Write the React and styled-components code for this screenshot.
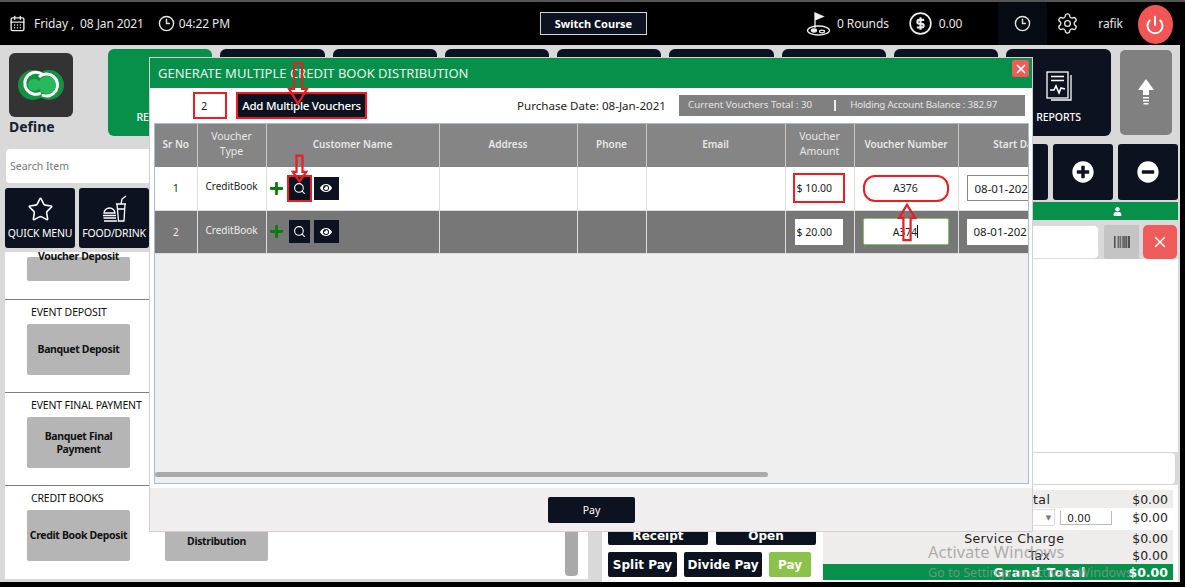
import { createGlobalStyle } from 'styled-components'
import styled from 'styled-components'
import { CalendarDays, Clock3, Settings, Power, Search, Star, X } from 'lucide-react'
import { FaEye, FaPlus, FaPlusCircle, FaMinusCircle, FaUser, FaBarcode } from 'react-icons/fa'

const GlobalStyle = createGlobalStyle`
  * {
    margin: 0;
    padding: 0;
    box-sizing: border-box;
  }

  html, body {
    width: 100%;
    height: 100%;
    overflow: hidden;
    background: #000;
    font-family: 'Noto Sans', 'Open Sans', sans-serif;
  }
`

const Page = styled.div`
  position: relative;
  width: 1185px;
  height: 587px;
  background: #000;
  border-top: 2px solid #555;
  overflow: hidden;
`

const TopBar = styled.header`
  display: flex;
  align-items: center;
  height: 43px;
  padding-left: 9px;
  color: #e6e6e6;
  font-size: 12px;
  letter-spacing: -0.1px;
  white-space: nowrap;
`

const TopItem = styled.div`
  display: flex;
  align-items: center;
  gap: ${({ gap }) => gap || 6}px;
  margin-left: ${({ left }) => left || 0}px;
`

const SwitchButton = styled.button`
  width: 107px;
  height: 23px;
  margin-left: ${({ left }) => left}px;
  background: #0c1220;
  border: 1px solid #d5d5d5;
  color: #fff;
  font: 700 11px 'Noto Sans', sans-serif;
`

const ClockBox = styled.div`
  display: flex;
  align-items: center;
  justify-content: center;
  width: 49px;
  height: 43px;
  margin-left: 36px;
  background: #060a12;
`

const PowerButton = styled.div`
  display: flex;
  align-items: center;
  justify-content: center;
  width: 35px;
  height: 39px;
  margin-left: 15px;
  margin-top: 2px;
  border-radius: 50%;
  background: #f25555;
  color: #fff;
`

const Workspace = styled.div`
  width: 1180px;
  height: 537px;
  background: #d9d9d9;
`

const NavRow = styled.div`
  display: flex;
  height: 98px;
  padding: 4px 0 0 9px;
`

const Brand = styled.div`
  width: 99px;
  padding-top: 4px;
  color: #15202e;
  font-size: 14px;
  font-weight: 700;
  line-height: 18px;
`

const LogoBox = styled.div`
  display: flex;
  align-items: center;
  justify-content: center;
  width: 64px;
  height: 64px;
  margin-bottom: 1px;
  border-radius: 6px;
  background: #333;
`

const NavTiles = styled.div`
  display: flex;
  gap: 8px;
`

const NavTile = styled.div`
  display: flex;
  flex-direction: column;
  align-items: center;
  justify-content: flex-end;
  gap: 9px;
  width: 104.3px;
  height: 87px;
  padding-bottom: 12px;
  border-radius: 6px;
  background: ${({ green }) => (green ? '#06904a' : '#0c1220')};
  color: #fff;
  font-size: 10.5px;
  font-weight: 500;
  letter-spacing: -0.1px;
`

const UpTile = styled.div`
  display: flex;
  align-items: center;
  justify-content: center;
  width: 52px;
  height: 85px;
  margin-left: 9px;
  margin-top: 1px;
  border-radius: 5px;
  background: #808080;
`

const Content = styled.div`
  display: flex;
  height: 439px;
`

const LeftCol = styled.div`
  display: flex;
  flex-direction: column;
  width: 594px;
  padding: 0 6px 3px 5px;
`

const SearchBox = styled.div`
  display: flex;
  align-items: center;
  height: 34px;
  margin: 6px 0 5px 1px;
  padding-left: 4px;
  border-radius: 4px;
  background: #fff;
  color: #777;
  font-size: 10.5px;
`

const CategoryRow = styled.div`
  display: flex;
  gap: 4px;
`

const CategoryTile = styled.div`
  display: flex;
  flex-direction: column;
  align-items: center;
  justify-content: flex-end;
  gap: 3px;
  width: 70px;
  height: 60px;
  padding-bottom: 8px;
  border-radius: 3px;
  background: #0c1220;
  color: #fff;
  font-size: 10.5px;
  letter-spacing: -0.2px;
  white-space: nowrap;
`

const ListPanel = styled.div`
  position: relative;
  flex: 1;
  margin-top: 4px;
  background: #fff;
  overflow: hidden;
`

const Section = styled.section`
  height: 93px;
  padding: 3px 0 0 22px;
  border-bottom: ${({ last }) => (last ? 0 : 1)}px solid #808080;
`

const StubSection = styled.section`
  height: 48px;
  padding: 5px 0 0 22px;
  border-bottom: 1px solid #808080;
`

const StubTile = styled.div`
  width: 103px;
  height: 24px;
  border-radius: 2px;
  background: #b5b5b5;
  color: #111;
  font-size: 10.5px;
  font-weight: 700;
  letter-spacing: -0.35px;
  line-height: 13px;
  text-align: center;
`

const StubLabel = styled.div`
  transform: translateY(-7px);
`

const SectionTitle = styled.div`
  height: 21px;
  padding-left: 4px;
  color: #111;
  font-size: 10.5px;
  letter-spacing: -0.15px;
  line-height: 19px;
`

const ItemRow = styled.div`
  display: flex;
  gap: 35px;
`

const ItemTile = styled.div`
  display: flex;
  align-items: center;
  justify-content: center;
  width: 103px;
  height: 51px;
  padding-top: ${({ low }) => low || 0}px;
  border-radius: 2px;
  background: #b5b5b5;
  color: #111;
  font-size: 10.5px;
  font-weight: 700;
  letter-spacing: -0.35px;
  line-height: 13px;
  text-align: center;
`

const ListScroll = styled.div`
  position: absolute;
  top: 0;
  right: 10px;
  bottom: 3px;
  width: 13px;
  border-radius: 4px;
  background: #a9a9a9;
`

const RightCol = styled.div`
  display: flex;
  flex-direction: column;
  flex: 1;
  padding: 1px 2px 0 8px;
`

const ActionRow = styled.div`
  display: flex;
  justify-content: flex-end;
  gap: 5px;
  height: 56px;
`

const ActionTile = styled.div`
  display: flex;
  align-items: center;
  justify-content: center;
  width: 60px;
  border-radius: 3px;
  background: #0c1220;
  color: #fff;
`

const GreenBar = styled.div`
  display: flex;
  align-items: center;
  justify-content: flex-end;
  height: 18px;
  margin-top: 2px;
  padding-right: 56px;
  background: #06904a;
  color: #fff;
`

const CustomerRow = styled.div`
  display: flex;
  gap: 4px;
  height: 34px;
  margin-top: 5px;
`

const CustomerInput = styled.div`
  flex: 1;
  margin-right: 1px;
  border: 1px solid #ddd;
  border-radius: 5px;
  background: #fff;
`

const BarcodeButton = styled.div`
  display: flex;
  align-items: center;
  justify-content: center;
  width: 35px;
  border-radius: 2px;
  background: #c4c4c4;
  color: #222;
`

const ClearButton = styled.div`
  display: flex;
  align-items: center;
  justify-content: center;
  width: 34px;
  margin-right: 1px;
  border-radius: 5px;
  background: #ef5a5a;
  color: #fff;
`

const OrderArea = styled.div`
  height: 193px;
  background: #fff;
`

const NoteBox = styled.div`
  height: 33px;
  margin-right: 2px;
  border: 1px solid #d5d5d5;
  border-radius: 5px;
  background: #fff;
`

const BottomArea = styled.div`
  display: flex;
  gap: 7px;
  flex: 1;
  padding: 5px 5px 0 6px;
  background: #fff;
`

const PayColumn = styled.div`
  display: flex;
  flex-direction: column;
  justify-content: flex-end;
  width: 208px;
  gap: 7px;
  padding-bottom: 5px;
`

const PayRow = styled.div`
  display: flex;
  gap: ${({ gap }) => gap || 8}px;
`

const PayButton = styled.div`
  display: flex;
  align-items: center;
  justify-content: center;
  width: ${({ w }) => w}px;
  height: ${({ h }) => h}px;
  border-radius: 2px;
  background: ${({ green }) => (green ? '#8bc34a' : '#0c1220')};
  color: #fff;
  font: 700 12px 'DejaVu Sans', sans-serif;
  white-space: nowrap;
`

const Totals = styled.div`
  display: flex;
  flex-direction: column;
  flex: 1;
`

const TotalRow = styled.div`
  display: flex;
  align-items: center;
  justify-content: flex-end;
  height: ${({ h }) => h || 17}px;
  padding-right: 5px;
  padding-bottom: ${({ tone }) => (tone === 'plain' ? 3 : 0)}px;
  background: ${({ tone }) => (tone === 'green' ? '#06904a' : tone === 'plain' ? '#fff' : '#efecec')};
  color: ${({ tone }) => (tone === 'green' ? '#fff' : '#222')};
  font: ${({ tone }) => (tone === 'green' ? 700 : 400)} 12.5px 'DejaVu Sans', sans-serif;
`

const TotalLabel = styled.span`
  margin-right: ${({ gap }) => gap}px;
  letter-spacing: ${({ wide }) => (wide ? 1.1 : 0.35)}px;
`

const DiscountSelect = styled.span`
  display: flex;
  align-items: center;
  justify-content: flex-end;
  width: 25px;
  height: 17px;
  margin-right: 5px;
  padding-right: 3px;
  border: 1px solid #ddd;
  color: #777;
  font-size: 7px;
`

const DiscountInput = styled.span`
  display: inline-block;
  width: 52px;
  height: 14px;
  margin-right: 20px;
  padding-left: 6px;
  border: 1px solid #bbb;
  border-top: 0;
  font-size: 10.5px;
  line-height: 14px;
`

const Watermark = styled.div`
  position: absolute;
  left: 928px;
  top: ${({ top }) => top}px;
  color: rgba(150, 150, 150, 0.75);
  font-size: ${({ size }) => size}px;
  line-height: 20px;
  white-space: nowrap;
  pointer-events: none;
`

const Modal = styled.div`
  position: absolute;
  left: 149px;
  top: 55px;
  display: flex;
  flex-direction: column;
  width: 884px;
  height: 475px;
  background: #fff;
  border: 1px solid #d0d0d0;
`

const ModalTitle = styled.div`
  display: flex;
  align-items: center;
  justify-content: space-between;
  height: 30px;
  flex-shrink: 0;
  padding: 0 3px 0 8px;
  background: #06904a;
  color: #e8f4ec;
  font-size: 13px;
`

const CloseButton = styled.div`
  display: flex;
  align-items: center;
  justify-content: center;
  width: 17px;
  height: 17px;
  margin-top: -9px;
  border-radius: 2px;
  background: #ef5a5a;
  color: #fff;
`

const Toolbar = styled.div`
  display: flex;
  align-items: center;
  height: 35px;
  flex-shrink: 0;
  padding: 0 7px 0 43px;
  white-space: nowrap;
`

const CountInput = styled.div`
  display: flex;
  align-items: center;
  width: 34px;
  height: 27px;
  padding-left: 6px;
  border: 2px solid #ee1c25;
  color: #222;
  font-size: 11px;
`

const AddButton = styled.div`
  display: flex;
  align-items: center;
  justify-content: center;
  width: 131px;
  height: 27px;
  margin-left: 9px;
  border: 2px solid #ee1c25;
  background: #0c1220;
  color: #fff;
  font-size: 11.5px;
  font-weight: 500;
  letter-spacing: -0.25px;
`

const PurchaseDate = styled.div`
  margin-left: auto;
  color: #222;
  font-size: 11.6px;
`

const Summary = styled.div`
  display: flex;
  align-items: center;
  width: 346px;
  height: 21px;
  margin-left: 13px;
  padding: 0 0 3px 9px;
  background: #808080;
  color: #e4e4e4;
  font-size: 9.8px;
`

const SummaryDivider = styled.span`
  width: 2px;
  height: 11px;
  margin: 3px 14px 0 22px;
  background: #eee;
`

const SummaryPart = styled.span`
  letter-spacing: -0.2px;
`

const TableFrame = styled.div`
  display: flex;
  flex-direction: column;
  height: 361px;
  flex-shrink: 0;
  margin: 0 3px 0 4px;
  border: 1px solid #a9bdd0;
  background: #efefef;
  overflow: hidden;
`

const TableScroll = styled.div`
  flex: 1;
  overflow: hidden;
`

const Table = styled.table`
  width: 1250px;
  table-layout: fixed;
  border-collapse: collapse;
`

const HeadCell = styled.th`
  height: 43px;
  padding-bottom: 3px;
  border-right: 1px solid #c8c8c8;
  background: #858585;
  color: #e8e8e8;
  font-size: ${({ thin }) => (thin ? 10.5 : 10)}px;
  font-weight: ${({ thin }) => (thin ? 400 : 600)};
  line-height: 15px;
  white-space: nowrap;
`

const Row = styled.tr`
  background: ${({ dark }) => (dark ? '#777' : '#fff')};
  color: ${({ dark }) => (dark ? '#eee' : '#222')};
`

const Cell = styled.td`
  height: 43px;
  padding-left: ${({ pad }) => pad || 0}px;
  padding-bottom: ${({ raised }) => (raised ? 4 : 0)}px;
  border-right: 1px solid #ddd;
  border-bottom: 1px solid #ddd;
  font-size: 10px;
  text-align: ${({ left }) => (left ? 'left' : 'center')};
`

const CustomerTools = styled.div`
  display: flex;
  align-items: center;
  color: #0a7d10;
`

const ToolButton = styled.div`
  display: flex;
  align-items: center;
  justify-content: center;
  width: ${({ w }) => w}px;
  height: 23px;
  margin-left: ${({ left }) => left}px;
  background: #0c1220;
  color: #fff;
  outline: ${({ mark }) => (mark ? '2px solid #ee1c25' : 'none')};
`

const AmountInput = styled.div`
  display: flex;
  align-items: center;
  width: 48px;
  height: 26px;
  margin-left: 9px;
  padding-left: 2px;
  background: #fff;
  color: #222;
  font-size: 10.5px;
  outline: ${({ mark }) => (mark ? '2px solid #ee1c25' : 'none')};
`

const NumberInput = styled.div`
  display: flex;
  align-items: center;
  justify-content: center;
  width: 86px;
  height: 27px;
  margin-left: 8px;
  background: #fff;
  color: #222;
  font-size: 10.5px;
  border: ${({ oval }) => (oval ? '2px solid #ee1c25' : '1px solid #8fbf6a')};
  border-radius: ${({ oval }) => (oval ? '12px' : '2px')};
`

const Caret = styled.span`
  width: 1px;
  height: 13px;
  background: #111;
`

const DateInput = styled.div`
  display: flex;
  align-items: center;
  width: 90px;
  height: 26px;
  margin-left: 8px;
  padding-left: 7px;
  background: #fff;
  color: #222;
  font-size: 11.5px;
  border: ${({ boxed }) => (boxed ? '1px solid #888' : '0')};
`

const ScrollTrack = styled.div`
  height: 5px;
  margin-bottom: 6px;
  flex-shrink: 0;
`

const ScrollThumb = styled.div`
  width: 613px;
  height: 100%;
  border-radius: 3px;
  background: #aaa;
`

const ModalFooter = styled.div`
  display: flex;
  justify-content: center;
  flex: 1;
  margin-top: 4px;
  padding-top: 9px;
  background: #f0eeee;
`

const ModalPay = styled.div`
  display: flex;
  align-items: center;
  justify-content: center;
  width: 87px;
  height: 26px;
  margin-left: 1px;
  border-radius: 2px;
  background: #0c1220;
  color: #fff;
  font-size: 10.5px;
`

const Arrow = styled.svg`
  position: absolute;
  left: ${({ x }) => x}px;
  top: ${({ y }) => y}px;
  overflow: visible;
`

const MarkArrow = ({ x, y, w, h, up }) => (
  <Arrow x={x} y={y} width={w} height={h} viewBox="0 0 20 40" preserveAspectRatio="none">
    <path
      d={up ? 'M10 1 L19 15 L14 15 L14 39 L6 39 L6 15 L1 15 Z' : 'M6 1 L14 1 L14 25 L19 25 L10 39 L1 25 L6 25 Z'}
      fill="none"
      stroke="#ee1c25"
      strokeWidth="2.2"
      vectorEffect="non-scaling-stroke"
    />
  </Arrow>
)

const DefineLogo = () => (
  <svg width="50" height="50" viewBox="0 0 50 50">
    <circle cx="17" cy="25" r="15" fill="#12933f" />
    <circle cx="33" cy="25" r="15" fill="#12933f" />
    <circle cx="31" cy="25" r="9" fill="#27b85c" />
    <circle cx="18" cy="25" r="6" fill="#27b85c" />
    <path d="M27 15 A11 11 0 1 0 25 33" fill="none" stroke="#fff" strokeWidth="3" />
    <path d="M23 17 A11 11 0 1 1 26 35" fill="none" stroke="#fff" strokeWidth="3" />
  </svg>
)

const GolfIcon = () => (
  <svg width="25" height="25" viewBox="0 0 25 25" fill="none" stroke="#eee" strokeWidth="1.3">
    <path d="M9 17 V2 L17 5.500 L9 9" fill="#eee" />
    <ellipse cx="12.500" cy="19.500" rx="11" ry="4.500" />
    <ellipse cx="8" cy="19.500" rx="2.500" ry="1.500" fill="#eee" />
    <ellipse cx="16" cy="20.500" rx="2.500" ry="1.300" />
  </svg>
)

const DollarIcon = () => (
  <svg width="23" height="23" viewBox="0 0 24 24" fill="none" stroke="#eee" strokeWidth="1.7">
    <circle cx="12" cy="12" r="10.800" />
    <path d="M15.800 8.200 H10.700 a2 2 0 0 0 0 4 h2.600 a2 2 0 0 1 0 4 H8.200 M12 5.500 V18.500" strokeWidth="2.200" />
  </svg>
)

const FoodIcon = () => (
  <svg width="25" height="28" viewBox="0 0 25 28" fill="none" stroke="#fff" strokeWidth="1.300">
    <path d="M14 9 H24 M15 9 L16.500 26 H22 L23 9 M15.500 14 H22.700" />
    <path d="M19 9 L20 4 L24 1" />
    <path d="M2 18 a5.500 5 0 0 1 11 0 Z" />
    <path d="M1 20.500 H14 M1.500 23 H14 M2 26 H15" />
  </svg>
)

const ReportIcon = () => (
  <svg width="26" height="30" viewBox="0 0 26 30" fill="none" stroke="#fff" strokeWidth="1.300">
    <rect x="1" y="1" width="21" height="26" />
    <path d="M25 4 V29 H5" />
    <path d="M5 5.500 H18 M5 9.500 H18" />
    <path d="M4 19 L8 19 L10 15 L13 22 L15 17 L19 18" strokeWidth="1.600" />
  </svg>
)

const UpIcon = () => (
  <svg width="16" height="27" viewBox="0 0 16 27" fill="#fff">
    <path d="M8 0 L16 11 L11 11 L11 16 L5 16 L5 11 L0 11 Z" />
    <path d="M5 18 H11 V19.500 H5 Z M5 21 H11 V22.500 H5 Z M5.500 24 H10.500 V25.500 H5.500 Z" />
  </svg>
)

const columns = [
  { w: 42, label: 'Sr No' },
  { w: 69, label: <>Voucher<br />Type</>, thin: true },
  { w: 173, label: 'Customer Name' },
  { w: 138, label: 'Address' },
  { w: 69, label: 'Phone' },
  { w: 139, label: 'Email' },
  { w: 69, label: <>Voucher<br />Amount</>, thin: true },
  { w: 104, label: 'Voucher Number' },
  { w: 120, label: 'Start Date' },
  { w: 327, label: '' },
]

const VoucherRow = ({ index, dark, amount, number }) => (
  <Row dark={dark}>
    <Cell>{index}</Cell>
    <Cell raised>CreditBook</Cell>
    <Cell left pad={2}>
      <CustomerTools>
        <FaPlus size={15} />
        <ToolButton w={21} left={5} mark={!dark}><Search size={13} /></ToolButton>
        <ToolButton w={25} left={4}><FaEye size={12} /></ToolButton>
      </CustomerTools>
    </Cell>
    <Cell />
    <Cell />
    <Cell />
    <Cell left><AmountInput mark={!dark}>$ {amount}</AmountInput></Cell>
    <Cell left>
      <NumberInput oval={!dark}>{number}{dark && <Caret />}</NumberInput>
    </Cell>
    <Cell left><DateInput boxed={!dark}>08-01-2021</DateInput></Cell>
    <Cell />
  </Row>
)

function App() {
  return (
    <Page>
      <GlobalStyle />
      <TopBar>
        <TopItem gap={8}><CalendarDays size={17} /><span>Friday ,&nbsp; 08 Jan 2021</span></TopItem>
        <TopItem gap={4} left={14}><Clock3 size={17} /><span>04:22 PM</span></TopItem>
        <SwitchButton left={310}>Switch Course</SwitchButton>
        <TopItem gap={6} left={159}><GolfIcon /><span>0 Rounds</span></TopItem>
        <TopItem gap={7} left={20}><DollarIcon /><span>0.00</span></TopItem>
        <ClockBox><Clock3 size={17} /></ClockBox>
        <TopItem left={9}><Settings size={23} strokeWidth={1.4} /></TopItem>
        <TopItem left={19}>rafik</TopItem>
        <PowerButton><Power size={20} strokeWidth={2.4} /></PowerButton>
      </TopBar>
      <Workspace>
        <NavRow>
          <Brand>
            <LogoBox><DefineLogo /></LogoBox>
            Define
          </Brand>
          <NavTiles>
            <NavTile green><FaBarcode size={20} />REGISTER</NavTile>
            <NavTile />
            <NavTile />
            <NavTile />
            <NavTile />
            <NavTile />
            <NavTile />
            <NavTile />
            <NavTile><ReportIcon />REPORTS</NavTile>
          </NavTiles>
          <UpTile><UpIcon /></UpTile>
        </NavRow>
        <Content>
          <LeftCol>
            <SearchBox>Search Item</SearchBox>
            <CategoryRow>
              <CategoryTile><Star size={27} strokeWidth={1.4} />QUICK MENU</CategoryTile>
              <CategoryTile><FoodIcon />FOOD/DRINK</CategoryTile>
            </CategoryRow>
            <ListPanel>
              <StubSection>
                <StubTile><StubLabel>Voucher Deposit</StubLabel></StubTile>
              </StubSection>
              <Section>
                <SectionTitle>EVENT DEPOSIT</SectionTitle>
                <ItemRow><ItemTile>Banquet Deposit</ItemTile></ItemRow>
              </Section>
              <Section>
                <SectionTitle>EVENT FINAL PAYMENT</SectionTitle>
                <ItemRow><ItemTile>Banquet Final<br />Payment</ItemTile></ItemRow>
              </Section>
              <Section last>
                <SectionTitle>CREDIT BOOKS</SectionTitle>
                <ItemRow>
                  <ItemTile>Credit Book Deposit</ItemTile>
                  <ItemTile low={12}>Distribution</ItemTile>
                </ItemRow>
              </Section>
              <ListScroll />
            </ListPanel>
          </LeftCol>
          <RightCol>
            <ActionRow>
              <ActionTile />
              <ActionTile><FaPlusCircle size={22} /></ActionTile>
              <ActionTile><FaMinusCircle size={22} /></ActionTile>
            </ActionRow>
            <GreenBar><FaUser size={9} /></GreenBar>
            <CustomerRow>
              <CustomerInput />
              <BarcodeButton><FaBarcode size={16} /></BarcodeButton>
              <ClearButton><X size={18} /></ClearButton>
            </CustomerRow>
            <OrderArea />
            <NoteBox />
            <BottomArea>
              <PayColumn>
                <PayRow>
                  <PayButton w={100} h={18}>Receipt</PayButton>
                  <PayButton w={100} h={18}>Open</PayButton>
                </PayRow>
                <PayRow gap={7}>
                  <PayButton w={69} h={25}>Split Pay</PayButton>
                  <PayButton w={78} h={25}>Divide Pay</PayButton>
                  <PayButton w={42} h={25} green>Pay</PayButton>
                </PayRow>
              </PayColumn>
              <Totals>
                <TotalRow h={18}><TotalLabel gap={82}>Sub Total</TotalLabel>$0.00</TotalRow>
                <TotalRow h={22} tone="plain"><DiscountSelect>▼</DiscountSelect><DiscountInput>0.00</DiscountInput>$0.00</TotalRow>
                <TotalRow h={17}><TotalLabel gap={68}>Service Charge</TotalLabel>$0.00</TotalRow>
                <TotalRow h={17}><TotalLabel gap={82}>Tax</TotalLabel>$0.00</TotalRow>
                <TotalRow h={16} tone="green"><TotalLabel gap={42} wide>Grand Total</TotalLabel>$0.00</TotalRow>
              </Totals>
            </BottomArea>
          </RightCol>
        </Content>
      </Workspace>

      <Modal>
        <ModalTitle>
          GENERATE MULTIPLE CREDIT BOOK DISTRIBUTION
          <CloseButton><X size={14} strokeWidth={3} /></CloseButton>
        </ModalTitle>
        <Toolbar>
          <CountInput>2</CountInput>
          <AddButton>Add Multiple Vouchers</AddButton>
          <PurchaseDate>Purchase Date: 08-Jan-2021</PurchaseDate>
          <Summary>
            Current Vouchers Total : 30
            <SummaryDivider />
            <SummaryPart>Holding Account Balance : 382.97</SummaryPart>
          </Summary>
        </Toolbar>
        <TableFrame>
          <TableScroll>
            <Table>
              <colgroup>
                {columns.map((c, i) => <col key={i} width={c.w} />)}
              </colgroup>
              <thead>
                <tr>
                  {columns.map((c, i) => <HeadCell key={i} thin={c.thin}>{c.label}</HeadCell>)}
                </tr>
              </thead>
              <tbody>
                <VoucherRow index={1} amount="10.00" number="A376" />
                <VoucherRow index={2} dark amount="20.00" number="A374" />
              </tbody>
            </Table>
          </TableScroll>
          <ScrollTrack><ScrollThumb /></ScrollTrack>
        </TableFrame>
        <ModalFooter><ModalPay>Pay</ModalPay></ModalFooter>
      </Modal>

      <MarkArrow x={288} y={60} w={20} h={43} />
      <MarkArrow x={292} y={153} w={15} h={27} />
      <MarkArrow x={898} y={202} w={18} h={37} up />

      <Watermark top={540} size={16.5}>Activate Windows</Watermark>
      <Watermark top={561} size={12.5}>Go to Settings to activate Windows.</Watermark>
    </Page>
  )
}

export default App
